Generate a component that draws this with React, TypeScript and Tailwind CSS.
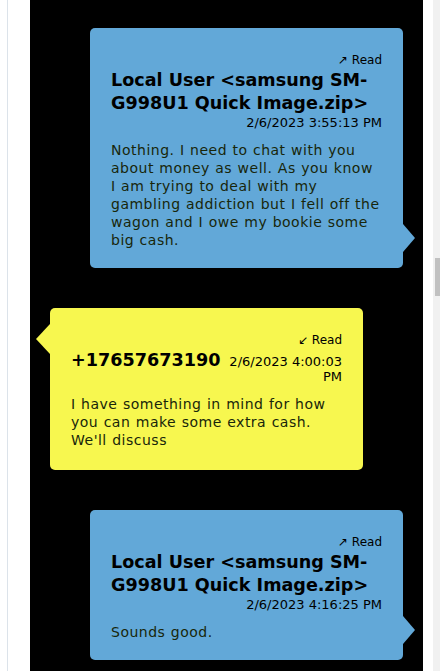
import React from "react";

const font = { fontFamily: '"DejaVu Sans", Verdana, sans-serif' };

type Msg = {
  side: "out" | "in";
  arrow: string;
  name: string;
  date: string;
  body: string;
};

const msgs: Msg[] = [
  {
    side: "out",
    arrow: "↗",
    name: "Local User <samsung SM-G998U1 Quick Image.zip>",
    date: "2/6/2023 3:55:13 PM",
    body: "Nothing. I need to chat with you about money as well. As you know I am trying to deal with my gambling addiction but I fell off the wagon and I owe my bookie some big cash.",
  },
  {
    side: "in",
    arrow: "↙",
    name: "+17657673190",
    date: "2/6/2023 4:00:03 PM",
    body: "I have something in mind for how you can make some extra cash. We'll discuss",
  },
  {
    side: "out",
    arrow: "↗",
    name: "Local User <samsung SM-G998U1 Quick Image.zip>",
    date: "2/6/2023 4:16:25 PM",
    body: "Sounds good.",
  },
];

function Bubble({ m }: { m: Msg }) {
  const out = m.side === "out";
  return (
    <div
      className={
        "relative w-[313px] rounded-[5px] px-[21px] pt-[24px] " +
        (out ? "self-end mr-[20px] pb-[19px] bg-[#62a8d8]" : "ml-[20px] pb-[21px] bg-[#f7f74f]")
      }
    >
      {out ? (
        <div className="absolute -right-[12px] bottom-[16px] h-0 w-0 border-y-[14px] border-l-[12px] border-y-transparent border-l-[#62a8d8]" />
      ) : (
        <div className="absolute -left-[14px] top-[16px] h-0 w-0 border-y-[15px] border-r-[14px] border-y-transparent border-r-[#f7f74f]" />
      )}
      <div className="text-right text-[12px] leading-[17px] text-black">
        {m.arrow} Read
      </div>
      {out ? (
        <div>
          <div className="text-[17.6px] font-bold leading-[23px] text-black">{m.name}</div>
          <div className="text-right text-[13px] leading-[15px] text-black">{m.date}</div>
        </div>
      ) : (
        <div className="flex items-baseline justify-between gap-[6px]">
          <div className="shrink-0 text-[17.6px] font-bold leading-[23px] text-black">{m.name}</div>
          <div className="text-right text-[13px] leading-[15px] text-black">{m.date}</div>
        </div>
      )}
      <div className="mt-[11px] text-[14px] leading-[18px] tracking-[0.5px] [word-spacing:0.5px] text-[#18260a]">
        {m.body}
      </div>
    </div>
  );
}

export default function App() {
  return (
    <div className="flex h-[671px] w-[440px] overflow-hidden bg-white" style={font}>
      <div className="w-[30px] shrink-0 pl-[7px]">
        <div className="h-full w-px bg-[#dce3ea]" />
      </div>
      <div className="flex w-[393px] shrink-0 flex-col gap-[40px] bg-black pt-[28px]">
        {msgs.map((m, i) => (
          <Bubble key={i} m={m} />
        ))}
      </div>
      <div className="w-[10px] shrink-0 bg-white" />
      <div className="w-[7px] shrink-0 bg-[#f1f1f1] pl-[2px] pt-[258px]">
        <div className="h-[38px] w-full bg-[#c1c1c1]" />
      </div>
    </div>
  );
}
